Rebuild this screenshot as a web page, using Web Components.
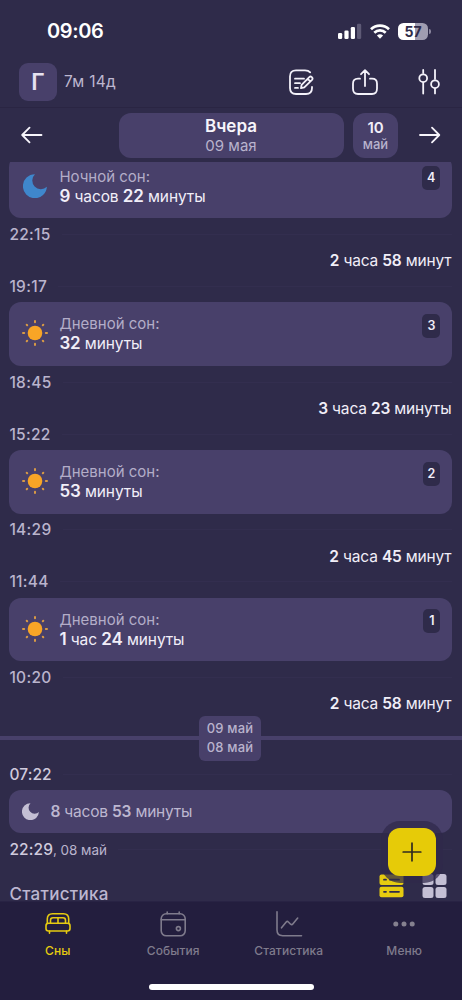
<!DOCTYPE html>
<html lang="ru">
<head>
<meta charset="utf-8">
<title>Сны</title>
<style>
html,body{margin:0;height:100%;background:#2f2b4a}
body{font-family:Inter,"Noto Sans",sans-serif;color:#f1eef8;overflow:hidden}
b{font-weight:600}
</style>
</head>
<body>
<sleep-app>
  <status-bar slot="top">09:06</status-bar>
  <profile-bar slot="top" initial="Г">7м 14д</profile-bar>
  <date-nav slot="top"></date-nav>
  <sleep-card kind="moon" num="4" label="Ночной сон:"><b>9</b> часов <b>22</b> минуты</sleep-card>
  <time-mark>22:15</time-mark>
  <wake-gap><b>2</b> часа <b>58</b> минут</wake-gap>
  <time-mark>19:17</time-mark>
  <sleep-card kind="sun" num="3" label="Дневной сон:"><b>32</b> минуты</sleep-card>
  <time-mark>18:45</time-mark>
  <wake-gap><b>3</b> часа <b>23</b> минуты</wake-gap>
  <time-mark>15:22</time-mark>
  <sleep-card kind="sun" num="2" label="Дневной сон:"><b>53</b> минуты</sleep-card>
  <time-mark>14:29</time-mark>
  <wake-gap><b>2</b> часа <b>45</b> минут</wake-gap>
  <time-mark>11:44</time-mark>
  <sleep-card kind="sun" num="1" label="Дневной сон:"><b>1</b> час <b>24</b> минуты</sleep-card>
  <time-mark>10:20</time-mark>
  <wake-gap><b>2</b> часа <b>58</b> минут</wake-gap>
  <day-divider><span>09 май</span><span>08 май</span></day-divider>
  <time-mark bright>07:22</time-mark>
  <past-sleep><b>8</b> часов <b>53</b> минуты</past-sleep>
  <time-mark bright note=", 08 май">22:29</time-mark>
  <stats-head>Статистика</stats-head>
  <add-button slot="float"></add-button>
  <tab-bar slot="bottom">
    <tab-item icon="bed" active>Сны</tab-item>
    <tab-item icon="calendar">События</tab-item>
    <tab-item icon="chart">Статистика</tab-item>
    <tab-item icon="dots">Меню</tab-item>
  </tab-bar>
</sleep-app>
<script>
const define = (name, render) => customElements.define(name, class extends HTMLElement {
  constructor() {
    super();
    this.attachShadow({mode: 'open'}).innerHTML = '<style>:host,*{box-sizing:border-box}svg{display:block;flex:none}</style>' + render(this);
  }
});

define('sleep-app', () => `<style>
:host{display:flex;flex-direction:column;position:relative;height:1000px;width:462px;overflow:hidden;background:#2f2b4a}
main{flex:1;min-height:0;overflow:hidden;padding:0 9.6px 0 9.4px}
.scroll{margin-top:-7.3px;display:flex;flex-direction:column}
</style><slot name="top"></slot><main><div class="scroll"><slot></slot></div></main><slot name="bottom"></slot><slot name="float"></slot>`);

define('status-bar', () => `<style>
:host{display:flex;flex:none;align-items:center;justify-content:space-between;height:54px;padding:8px 31px 0 47px}
.t{font-weight:600;font-size:20px;letter-spacing:-.4px;color:#fff}
.r{display:flex;align-items:center;gap:8px}
.b{display:flex;align-items:center;gap:1px}
.c{width:30px;height:17px;border-radius:5.5px;background:linear-gradient(90deg,#fff 57%,#a09db1 57%);color:#2f2b4a;font:700 14px/17px Inter,sans-serif;text-align:center}
.n{width:2px;height:5px;border-radius:0 2px 2px 0;background:#8b879f}
</style><div class="t"><slot></slot></div><div class="r">
<svg width="24" height="16" viewBox="0 0 24 16" fill="#fff"><rect x="0" y="10" width="4.2" height="6" rx="1.3"/><rect x="6.4" y="7.4" width="4.2" height="8.6" rx="1.3"/><rect x="12.8" y="4" width="4.2" height="12" rx="1.3"/><rect x="19" y=".8" width="4.2" height="15.2" rx="1.3" fill="#5e5a76"/></svg>
<svg width="20" height="15" viewBox="0 0 20 15" fill="none" stroke="#fff" stroke-width="2.7"><path d="M1 5.2C6 .3 14 .3 19 5.2"/><path d="M4.3 8.7C7.5 5.6 12.5 5.6 15.7 8.7"/><path d="M10 14.7 6.9 11.4Q10 8.9 13.1 11.4Z" fill="#fff" stroke="none"/></svg>
<div class="b"><div class="c">57</div><div class="n"></div></div></div>`);

define('profile-bar', el => `<style>
:host{display:flex;flex:none;align-items:center;height:54px;padding:2px 21px 0 19px;border-bottom:1px solid #2a2543}
.a{width:38px;height:38px;border-radius:9px;background:#48406a;display:grid;place-items:center;font-weight:600;font-size:23px;color:#e6e2f0}
.n{flex:1;margin-left:7px;font-size:15.5px;color:#bdb7d0;letter-spacing:.3px}
.i{display:flex;gap:38px;align-items:center}
.i svg:last-child{margin-left:1px}
svg{fill:none;stroke:#f4f2fa;stroke-width:1.8;stroke-linecap:round;stroke-linejoin:round}
</style><div class="a">${el.getAttribute('initial')}</div><div class="n"><slot></slot></div><div class="i">
<svg width="26" height="28" viewBox="0 0 26 28"><path d="M22.2 4.4Q20.5 2.4 17 2.4H8Q2 2.4 2 8.4V20Q2 26 8 26H18Q24 26 24 20V19"/><path d="M7 10.7h9M7 15.2h5M7 19.9h3" /><path d="M13 20.2 13.6 16.8 21.3 9.1Q22.5 8 23.8 9.1 25.2 10.5 24 11.8L16.3 19.4ZM19.7 10.8l2.6 2.6"/></svg>
<svg width="26" height="28" viewBox="0 0 26 28"><path d="M13 18V2.2M9 6.2 13 2.2l4 4M8 10.7H6Q1 10.7 1 15.7V20.5Q1 26 6 26H20Q25 26 25 20.5V15.7Q25 10.7 20 10.7H18"/></svg>
<svg width="24" height="28" viewBox="0 0 24 28"><path d="M6.2 2v3M6.2 14.4v11.1M18 2v9M18 20.4v5"/><circle cx="6.2" cy="10.2" r="3.9"/><circle cx="18" cy="16.2" r="3.9"/></svg></div>`);

define('date-nav', () => `<style>
:host{display:flex;flex:none;align-items:center;height:54px;padding:0 21px}
.d,.n{height:45px;background:#48406a;border-radius:12px;display:flex;flex-direction:column;align-items:center;justify-content:center}
.d{width:225px;margin-left:75.5px;padding-top:2px;font-size:15px;line-height:19px;color:#b9b3cd}
.d b{font-weight:600;font-size:17px;color:#f7f5fb}
.n{width:45px;margin:0 21px 0 9.5px;padding-top:1px;font-size:13px;line-height:17px;font-weight:500;color:#b9b3cd}
.n b{font-weight:600;font-size:15px;color:#f1eef8}
svg{fill:none;stroke:#f7f5fb;stroke-width:1.8;stroke-linecap:round;stroke-linejoin:round}
</style><svg width="22" height="18" viewBox="0 0 22 18"><path d="M20.5 9H1.5M8.5 1.7 1.2 9l7.3 7.3"/></svg>
<div class="d"><b>Вчера</b><span>09 мая</span></div><div class="n"><b>10</b><span>май</span></div>
<svg width="22" height="18" viewBox="0 0 22 18"><path d="M1 9H20M13 1.7 20.3 9 13 16.3"/></svg>`);

const moon = (size, color) => `<svg width="${size}" height="${size}" viewBox="0 0 24 24" fill="${color}"><path d="M12 .2A8.3 8.3 0 1 0 23.9 12.8 12 12 0 1 1 12 .2Z"/></svg>`;
const sun = `<svg width="26" height="26" viewBox="0 0 26 26" fill="#f8a526" stroke="#d99a45" stroke-width="2" stroke-linecap="round"><circle cx="13" cy="13" r="7.3" stroke="none"/><path d="M13 1v1.2M13 23.8V25M1 13h1.2M23.8 13H25M4.7 4.7l.5.5M20.8 20.8l.5.5M4.7 21.3l.5-.5M20.8 5.2l.5-.5"/></svg>`;

define('sleep-card', el => `<style>
:host{display:flex;flex:none;height:63.7px;border-radius:12px;background:#48406a;padding:0 12px 0 13px;align-items:center}
.i{width:26px;display:grid;place-items:center;margin:0 11px 2px 0}
.x{flex:1;font-size:15.5px;line-height:20px;letter-spacing:-.1px}
.l{color:#b3adc8;font-size:15px;letter-spacing:0}
::slotted(b){font-size:17px;line-height:19px}
.n{align-self:flex-start;margin-top:11.5px;min-width:17px;height:24px;padding:0 5px;border-radius:5px;background:#2f2b4a;font-weight:600;font-size:12.5px;line-height:24px;text-align:center}
</style><div class="i">${el.getAttribute('kind') === 'moon' ? moon(24, '#3f87cc') : sun}</div>
<div class="x"><div class="l">${el.getAttribute('label')}</div><div><slot></slot></div></div><div class="n">${el.getAttribute('num')}</div>`);

define('time-mark', el => `<style>
:host{display:flex;flex:none;align-items:center;height:32px;font-size:15.5px;font-weight:500;letter-spacing:.3px;color:#bab4cd}
:host([bright]){color:#cfcadd;letter-spacing:.1px;padding-top:2px}
i{font-style:normal;font-weight:400;font-size:13.5px;letter-spacing:-.05px;color:#bab4cd}
hr{flex:1;margin:0 0 0 11px;border:0;height:1px;background:#332e4f}
</style><slot></slot><i>${el.getAttribute('note') || ''}</i><hr>`);

define('wake-gap', () => `<style>
:host{display:block;flex:none;height:20px;line-height:22px;font-size:15.5px;letter-spacing:-.17px;text-align:right;padding-right:1px}
</style><slot></slot>`);

define('day-divider', () => `<style>
:host{display:flex;flex:none;align-items:center;height:45px;margin:2.3px -9.6px -3px -11.4px}
:host::before,:host::after{content:"";flex:1;height:4px;background:#48406a}
div{width:62px;height:45px;border-radius:6px;background:#48406a;display:flex;flex-direction:column;align-items:center;justify-content:center;font-size:13px;line-height:19.5px;letter-spacing:.15px;font-weight:500;color:#b9b3cd}
</style><div><slot></slot></div>`);

define('past-sleep', () => `<style>
:host{display:flex;flex:none;align-items:center;height:43px;border-radius:12px;background:#48406a;padding-left:13px;gap:11px;font-size:15.5px;letter-spacing:-.2px;color:#bdb7d0}
</style>${moon(17, '#c4bfd4')}<span><slot></slot></span>`);

define('stats-head', () => `<style>
:host{display:flex;flex:none;justify-content:space-between;height:40px;margin-top:9px;padding-right:5.4px;font-size:17px;line-height:41px;letter-spacing:.3px;font-weight:500;color:#bdb7d0}
div{display:flex;gap:18px}
</style><slot></slot><div>
<svg width="25" height="24" viewBox="0 0 25 24"><rect x=".5" y=".5" width="24" height="10.5" rx="2" fill="#e6cb10"/><rect x=".5" y="12.7" width="24" height="10.5" rx="2" fill="#e6cb10"/><path d="M5 5.7h2M11 5.7h9M5 17.8h2M11 17.8h9" stroke="#2f2b4a" stroke-width="1.8" stroke-linecap="round"/></svg>
<svg width="25" height="24" viewBox="0 0 25 24" fill="#c4bfd4"><rect x=".5" y="0" width="11" height="11" rx="2.5"/><rect x="13.5" y="0" width="11" height="11" rx="2.5"/><rect x=".5" y="13" width="11" height="11" rx="2.5"/><rect x="13.5" y="13" width="11" height="11" rx="2.5"/></svg></div>`);

define('add-button', () => `<style>
:host{position:absolute;left:388px;top:828px;width:48px;height:48px;border-radius:12px;background:#e6cb08;box-shadow:0 0 0 7px rgba(47,40,75,.72);display:grid;place-items:center}
</style><svg width="20" height="20" viewBox="0 0 20 20" stroke="#2f2b20" stroke-width="1.7" stroke-linecap="round"><path d="M10 1.2v17.6M1.2 10h17.6"/></svg>`);

define('tab-bar', () => `<style>
:host{display:flex;flex-direction:column;flex:none;height:99px;background:#231e3e;border-top:1px solid #282344}
nav{display:grid;grid-template-columns:repeat(4,1fr)}
.h{width:165px;height:6px;border-radius:3px;background:#fff;margin:16px auto 0}
</style><nav><slot></slot></nav><div class="h"></div>`);

const tabIcons = {
  bed: '<path d="M2.3 12.3V8Q2.3 2.7 7.5 2.7H18.5Q23.7 2.7 23.7 8V12.3M5.5 12V9.2Q5.5 6.7 8 6.7H18Q20.5 6.7 20.5 9.2V12M13 6.7V12"/><rect x="1" y="12.3" width="24" height="7.7" rx="2.5"/><path d="M4.5 20v2.2M21.5 20v2.2"/>',
  calendar: '<rect x="1.2" y="2.8" width="24" height="22" rx="5"/><path d="M1.2 8.8h24M7.2 1v1.8M19.2 1v1.8"/><circle cx="18.4" cy="17.6" r="2"/>',
  chart: '<path d="M1 .7V19Q1 24.7 6.7 24.7H25.5M5.5 16.8 10.2 11Q11.3 9.8 12.4 11L14.6 13.2Q15.8 14.2 16.8 13L21.7 7"/>',
  dots: '<g fill="#85818f" stroke="none"><circle cx="4.8" cy="13" r="2.5"/><circle cx="13" cy="13" r="2.5"/><circle cx="21.2" cy="13" r="2.5"/></g>'
};
define('tab-item', el => `<style>
:host{display:flex;flex-direction:column;align-items:center;padding-top:9px;height:66px;font-size:12px;line-height:16px;letter-spacing:.1px;color:#7f7b8c;font-weight:500}
:host([active]){color:#e6cb10}
svg{fill:none;stroke:currentColor;stroke-width:1.6;stroke-linecap:round;stroke-linejoin:round;margin-bottom:6px}
</style><svg width="26" height="26" viewBox="0 0 26 26" overflow="visible">${tabIcons[el.getAttribute('icon')]}</svg><span><slot></slot></span>`);
</script>
</body>
</html>
